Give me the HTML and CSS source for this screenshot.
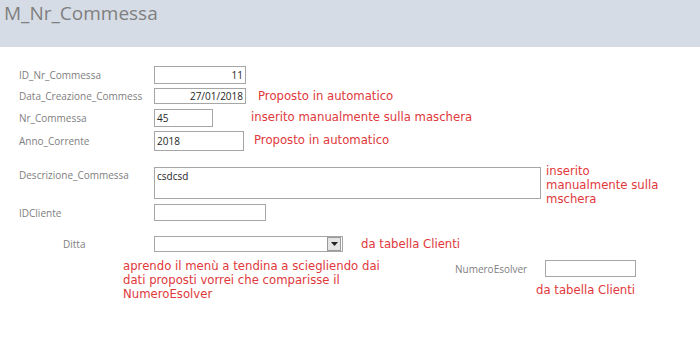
FILE: index.html
```html
<!DOCTYPE html>
<html>
<head>
    <title>M_Nr_Commessa</title>
    <link rel="stylesheet" href="styles.css">
</head>
<body>
    <div class="header">
        <h1>M_Nr_Commessa</h1>
    </div>

    <div class="form">
        <div class="row r1">
            <label>ID_Nr_Commessa</label>
            <div class="box num w92 h18">11</div>
        </div>
        <div class="row r2">
            <label>Data_Creazione_Commess</label>
            <div class="box num w92 h16">27/01/2018</div>
            <span class="note n2">Proposto in automatico</span>
        </div>
        <div class="row r3">
            <label>Nr_Commessa</label>
            <div class="box w59 h18">45</div>
            <span class="note n3">inserito manualmente sulla maschera</span>
        </div>
        <div class="row r4">
            <label>Anno_Corrente</label>
            <div class="box w90 h20">2018</div>
            <span class="note n4">Proposto in automatico</span>
        </div>
        <div class="row r5">
            <label class="top">Descrizione_Commessa</label>
            <div class="box area">csdcsd</div>
            <span class="note n5">inserito<br>manualmente sulla<br>mschera</span>
        </div>
        <div class="row r6">
            <label>IDCliente</label>
            <div class="box w112 h17"></div>
        </div>
        <div class="row r7">
            <label class="indent">Ditta</label>
            <div class="box combo">
                <span class="drop"><svg width="7" height="4" viewBox="0 0 7 4"><path d="M0 0h7L3.5 4z" fill="#222"/></svg></span>
            </div>
            <span class="note n7">da tabella Clienti</span>
        </div>
        <div class="row r8">
            <span class="note n8">aprendo il menù a tendina a sciegliendo dai dati proposti vorrei che comparisse il NumeroEsolver</span>
            <div class="esolver">
                <div class="esolver-line">
                    <label class="small">NumeroEsolver</label>
                    <div class="box w91 h17"></div>
                </div>
                <span class="note n9">da tabella Clienti</span>
            </div>
        </div>
    </div>
</body>
</html>
```

FILE: styles.css
```css
body { margin: 0; background: #fff; font-family: "Open Sans", "Noto Sans", sans-serif; }
.header { height: 47px; background: #d6dce5; }
h1 {
    margin: 0;
    padding: 0 0 0 4px;
    font-weight: normal;
    font-size: 19px;
    line-height: 26px;
    color: #7f7f7f;
}

.form { padding-left: 19px; }
.row { display: flex; align-items: center; }
label {
    width: 135px;
    flex: none;
    font-size: 10px;
    color: #808080;
}
label.top { align-self: flex-start; padding-top: 1px; }
label.indent { padding-left: 44px; width: 91px; }

.box {
    box-sizing: border-box;
    flex: none;
    border: 1px solid #a6a6a6;
    background: #fff;
    font-size: 10px;
    color: #262626;
    padding: 0 2px;
    display: flex;
    align-items: center;
}
.box.num { justify-content: flex-end; }
.w92 { width: 92px; }
.w90 { width: 90px; }
.w59 { width: 59px; }
.w112 { width: 112px; }
.w91 { width: 91px; }
.h16 { height: 16px; }
.h17 { height: 17px; }
.h18 { height: 18px; }
.h20 { height: 20px; }
.area { width: 387px; height: 32px; align-items: flex-start; padding-top: 1px; }
.combo { width: 189px; height: 16px; justify-content: flex-end; padding: 0; }
.drop {
    width: 12px;
    height: 12px;
    margin-right: 1px;
    border: 1px solid #9a9a9a;
    background: #e4e4e4;
    display: flex;
    align-items: center;
    justify-content: center;
}

.note {
    font-family: "DejaVu Sans", Verdana, sans-serif;
    font-size: 11.7px;
    line-height: 14px;
    color: #e0383c;
}

.r1 { margin-top: 19px; }
.r2 { margin-top: 4px; }
.r3 { margin-top: 5px; }
.r4 { margin-top: 4px; }
.r5 { margin-top: 16px; }
.r6 { margin-top: 5px; }
.r7 { margin-top: 15px; }
.r8 { margin-top: 7px; padding-left: 104px; align-items: flex-start; }

.n2 { margin-left: 12px; }
.n3 { margin-left: 38px; margin-top: -3px; }
.n4 { margin-left: 10px; margin-top: -2px; }
.n5 { margin-left: 5px; align-self: flex-start; margin-top: -3px; margin-bottom: -10px; }
.n7 { margin-left: 18px; }
.n8 { width: 268px; }
.esolver { margin-left: 64px; padding-top: 1px; }
.esolver-line { display: flex; align-items: center; }
label.small { width: 90px; }
.n9 { display: block; margin-left: 81px; margin-top: 6px; }
```
